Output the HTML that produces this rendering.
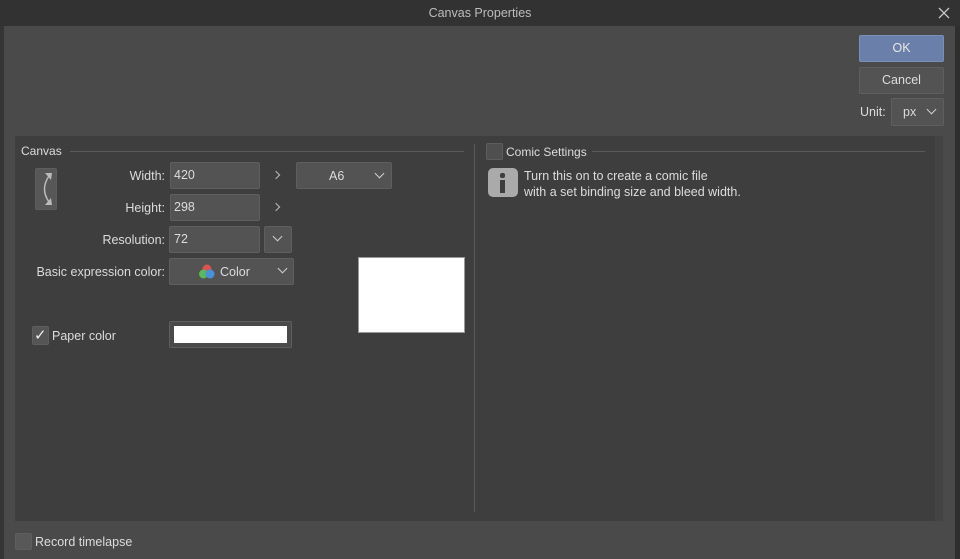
<!DOCTYPE html>
<html><head><style>
*{box-sizing:border-box;margin:0;padding:0}
body{width:960px;height:559px;overflow:hidden;background:#4a4a4a;font-family:"Liberation Sans",sans-serif;font-size:12.5px;color:#dcdcdc;position:relative}
.a{position:absolute}
.box{position:absolute;background:#535353;border:1px solid #5e5e5e;border-radius:2px}
.lbl{position:absolute;text-align:right;width:160px;left:5px}
.chev{position:absolute;width:7px;height:7px;border-right:1.3px solid #cfcfcf;border-bottom:1.3px solid #cfcfcf;transform:rotate(45deg)}
.gt{position:absolute;width:6px;height:6px;border-right:1.2px solid #bbb;border-top:1.2px solid #bbb;transform:rotate(45deg)}
</style></head><body>
<div class="a" style="left:0;top:0;width:960px;height:26px;background:#323232"></div>
<div class="a" style="left:0;top:6px;width:960px;text-align:center;color:#bdbdbd;font-size:12.5px">Canvas Properties</div>
<svg class="a" style="left:938px;top:7px" width="12" height="12"><path d="M1 1 L11 11 M11 1 L1 11" stroke="#c4c4c4" stroke-width="1.3"/></svg>
<div class="a" style="left:0;top:26px;width:4px;height:533px;background:#353535"></div>
<div class="a" style="left:955px;top:26px;width:5px;height:533px;background:#2f2f2f"></div>

<div class="a" style="left:859px;top:35px;width:85px;height:27px;background:#6a7fa9;border:1px solid #7b8fb8;border-radius:2px;text-align:center;line-height:25px;color:#e8e8e8">OK</div>
<div class="box" style="left:859px;top:67px;width:85px;height:27px;text-align:center;line-height:25px;color:#ddd">Cancel</div>
<div class="a" style="left:860px;top:105px;color:#ddd">Unit:</div>
<div class="box" style="left:891px;top:98px;width:53px;height:28px"><span class="a" style="left:11px;top:6px">px</span><div class="chev" style="left:36px;top:7px"></div></div>

<div class="a" style="left:15px;top:136px;width:928px;height:385px;background:#3e3e3e"></div>
<div class="a" style="left:935px;top:136px;width:8px;height:385px;background:#434343"></div>

<div class="a" style="left:21px;top:144px;font-size:12px">Canvas</div>
<div class="a" style="left:70px;top:151px;width:394px;height:1px;background:#5a5a5a"></div>
<div class="a" style="left:474px;top:144px;width:1px;height:368px;background:#5a5a5a"></div>

<div class="box" style="left:35px;top:168px;width:22px;height:42px;background:#575757">
<svg width="20" height="40" viewBox="0 0 20 40"><path d="M13 7 Q4 20 13 33" fill="none" stroke="#bbb" stroke-width="1.5"/><path d="M9 4 L16 4 L15 11 Z M9 36 L16 36 L15 29 Z" fill="#bbb"/></svg></div>

<div class="lbl" style="top:169px">Width:</div>
<div class="box" style="left:170px;top:162px;width:90px;height:27px"><span class="a" style="left:3px;top:5px">420</span></div>
<div class="gt" style="left:273px;top:172px"></div>
<div class="box" style="left:296px;top:162px;width:96px;height:27px"><span class="a" style="left:32px;top:6px">A6</span><div class="chev" style="left:79px;top:7px"></div></div>

<div class="lbl" style="top:201px">Height:</div>
<div class="box" style="left:170px;top:194px;width:90px;height:27px"><span class="a" style="left:3px;top:5px">298</span></div>
<div class="gt" style="left:273px;top:204px"></div>

<div class="lbl" style="top:233px">Resolution:</div>
<div class="box" style="left:169px;top:226px;width:91px;height:27px"><span class="a" style="left:4px;top:5px">72</span></div>
<div class="box" style="left:264px;top:226px;width:28px;height:27px"><div class="chev" style="left:9px;top:6px"></div></div>

<div class="lbl" style="top:265px">Basic expression color:</div>
<div class="box" style="left:169px;top:258px;width:125px;height:27px">
<svg class="a" style="left:28px;top:4px" width="18" height="17"><circle cx="9" cy="6" r="4.5" fill="#d9534f"/><circle cx="5.5" cy="11" r="4.5" fill="#5cb85c"/><circle cx="12" cy="11" r="4.5" fill="#4a90d9"/></svg>
<span class="a" style="left:50px;top:6px">Color</span><div class="chev" style="left:109px;top:6px"></div></div>

<div class="a" style="left:358px;top:257px;width:107px;height:76px;background:#fff;border:1px solid #999"></div>

<div class="box" style="left:32px;top:326px;width:17px;height:19px;background:#555"><span class="a" style="left:1px;top:-1px;font-size:15px;color:#eee">✓</span></div>
<div class="a" style="left:52px;top:329px">Paper color</div>
<div class="box" style="left:169px;top:321px;width:123px;height:27px;background:#4a4a4a"><div class="a" style="left:4px;top:4px;width:113px;height:17px;background:#fff"></div></div>

<div class="box" style="left:486px;top:143px;width:17px;height:17px;background:#4f4f4f"></div>
<div class="a" style="left:506px;top:145px;font-size:12px">Comic Settings</div>
<div class="a" style="left:592px;top:151px;width:333px;height:1px;background:#5a5a5a"></div>
<div class="a" style="left:488px;top:168px;width:30px;height:29px;background:#aaa;border-radius:5px"><div class="a" style="left:12px;top:5px;width:5px;height:5px;background:#3e3e3e;border-radius:2px"></div><div class="a" style="left:12px;top:12px;width:5px;height:13px;background:#3e3e3e"></div></div>
<div class="a" style="left:524px;top:168px;line-height:16px;font-size:12.5px">Turn this on to create a comic file<br>with a set binding size and bleed width.</div>

<div class="box" style="left:15px;top:533px;width:17px;height:17px;background:#585858"></div>
<div class="a" style="left:35px;top:535px">Record timelapse</div>
</body></html>
